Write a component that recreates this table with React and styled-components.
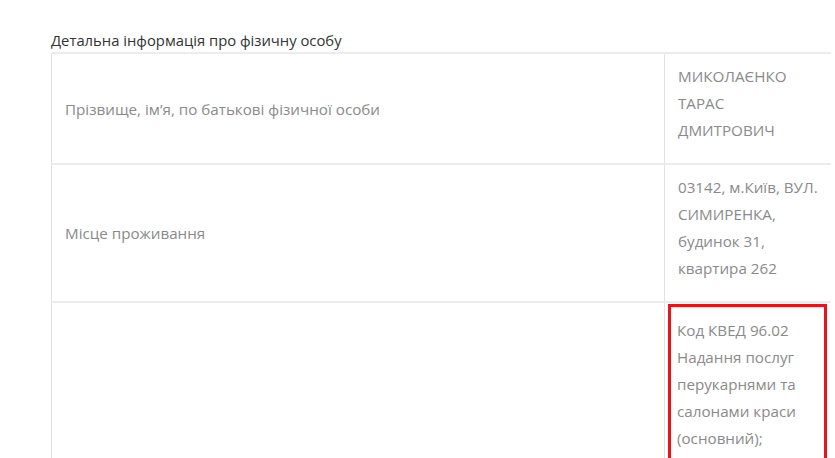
import React from 'react';
import styled, { createGlobalStyle } from 'styled-components';

const GlobalStyle = createGlobalStyle`
    body {
        margin: 0;
        background: #fff;
        font-family: "Open Sans", "Noto Sans", sans-serif;
    }
`;

const rows = [
    {
        label: 'Прізвище, ім\u2019я, по батькові фізичної особи',
        value: ['МИКОЛАЄНКО ТАРАС ДМИТРОВИЧ'],
    },
    {
        label: 'Місце проживання',
        value: ['03142, м.Київ, ВУЛ. СИМИРЕНКА, будинок 31, квартира 262'],
    },
    {
        label: '',
        value: ['Код КВЕД 96.02 Надання послуг перукарнями та салонами краси (основний);'],
        marked: true,
    },
];

function App() {
    return (
        <Wrapper>
            <GlobalStyle />
            <Title>Детальна інформація про фізичну особу</Title>
            <Table>
                <colgroup>
                    <col style={{ width: '613px' }} />
                    <col />
                </colgroup>
                <tbody>
                    {rows.map((row, i) => (
                        <tr key={i}>
                            <Label>{row.label}</Label>
                            <Value $marked={row.marked}>
                                {row.marked ? (
                                    <Marked>{row.value.map((v, j) => <p key={j}>{v}</p>)}</Marked>
                                ) : (
                                    row.value.map((v, j) => <p key={j}>{v}</p>)
                                )}
                            </Value>
                        </tr>
                    ))}
                </tbody>
            </Table>
        </Wrapper>
    );
}

const Wrapper = styled.div`
    padding: 29px 4px 0 51px;
    height: 458px;
    box-sizing: border-box;
    overflow: hidden;
`;

const Title = styled.div`
    font-size: 14.8px;
    line-height: 23px;
    color: #333;
`;

const Table = styled.table`
    width: 780px;
    table-layout: fixed;
    border-collapse: collapse;
    font-size: 15.2px;
    color: #8a8a8a;

    td {
        border-top: 2px solid #ececec;
        border-bottom: 2px solid #ececec;
        border-left: 1px solid #e2e2e2;
        vertical-align: middle;
    }

    p {
        margin: 0;
        line-height: 27px;
    }
`;

const Label = styled.td`
    padding: 10px 13px;
`;

const Value = styled.td`
    padding: ${p => (p.$marked ? '1px 4px 0 3px' : '9px 10px 19px 13px')};
    vertical-align: top !important;
`;

const Marked = styled.div`
    border: 3px solid #e8141c;
    padding: 10px 6px 0 6px;
    height: 220px;
`;

export default App;
